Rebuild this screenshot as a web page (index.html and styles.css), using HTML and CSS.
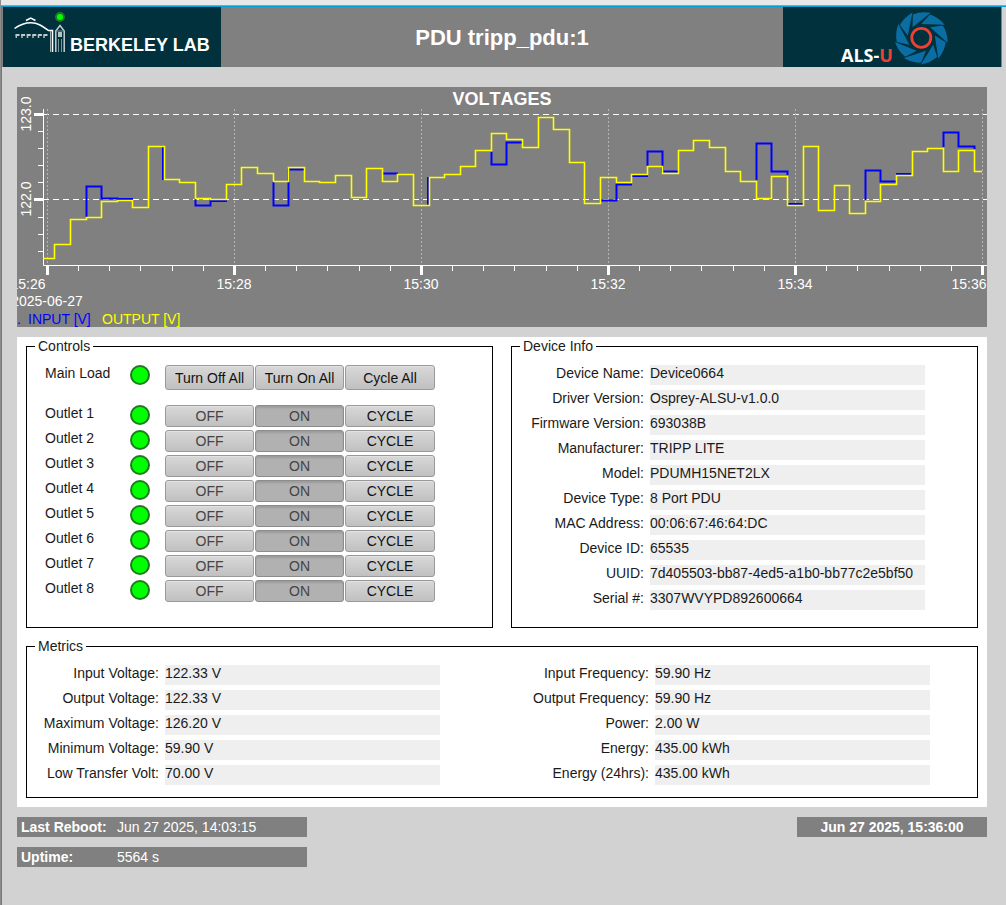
FILE: index.html
```html
<!DOCTYPE html>
<html lang="en">
<head>
<meta charset="utf-8">
<title>PDU tripp_pdu:1</title>
<link rel="stylesheet" href="styles.css">
</head>
<body>
<div class="window-strip"></div>
<div class="window">
  <header class="banner">
    <svg class="logo" viewBox="3 7 218 60" role="img" aria-label="Berkeley Lab">
      <g fill="none" stroke="#fff">
        <path d="M14.500 28.500C20 24.500 25 22.700 31 22.700C38 22.700 43 26.500 48.500 30.500H52.500V52" stroke-width="1.500"/>
        <path d="M50.500 31V52" stroke="#9fb0b5"/>
        <path d="M26 20.500L30.700 18L35.500 20.500" stroke-width="1.500"/>
        <path d="M15.500 35H48" stroke-width="1.600" stroke-dasharray="4 1.600"/>
        <path d="M16.300 35V38M22 35V38M27.500 35V38M33 35V38M38.500 35V38M44 35V38" stroke="#b5c2c6" stroke-width="1.500"/>
        <path d="M55.800 52V31L60 25.500L64.200 31V52" stroke="#c3ced1" stroke-width="1.500"/>
        <path d="M58.500 52V39M61.500 52V39M56 31H64" stroke="#7f959b"/>
      </g>
      <rect x="58" y="32" width="4" height="5" fill="#b5c2c6"/>
      <circle cx="60" cy="17" r="4" fill="#0f0" stroke="#1f7a1f" stroke-width="2"/>
      <text class="lab-name" x="70" y="51">BERKELEY LAB</text>
    </svg>
    <h1 class="title">PDU tripp_pdu:1</h1>
    <svg class="logo" viewBox="783 7 218 60" role="img" aria-label="ALS-U">
      <defs>
        <path id="blade" d="M-8.800 -10.500L-8.400 -23.300Q-1 -26.800 9.500 -25Z"/>
      </defs>
      <g transform="translate(921.300 37.800)" fill="#0a6ea5">
        <use href="#blade"/>
        <use href="#blade" transform="rotate(40)"/>
        <use href="#blade" transform="rotate(80)"/>
        <use href="#blade" transform="rotate(120)"/>
        <use href="#blade" transform="rotate(160)"/>
        <use href="#blade" transform="rotate(200)"/>
        <use href="#blade" transform="rotate(240)"/>
        <use href="#blade" transform="rotate(280)"/>
        <use href="#blade" transform="rotate(320)"/>
        <circle r="9.500" fill="none" stroke="#ee4035" stroke-width="2.800"/>
      </g>
      <text class="als-name" x="841" y="62">ALS-<tspan class="als-u">U</tspan></text>
    </svg>
  </header>

  <main class="content">
    <svg class="chart" viewBox="17 87 970 240" role="img" aria-label="Voltages">
      <text class="chart-title" x="502" y="105">VOLTAGES</text>
      <path class="grid-h" d="M43 114.500H987M43 199.500H987"/>
      <path class="grid-v" d="M47.500 109V265M234.500 109V265M421.500 109V265M608.500 109V265M795.500 109V265M982.500 109V265"/>
      <path class="axis" d="M43.500 109V265.500H987"/>
      <path class="axis" d="M38 131.500H43M38 148.500H43M38 165.500H43M38 182.500H43M38 217.500H43M38 234.500H43M38 251.500H43"/>
      <path class="axis" d="M78.500 266V271M109.500 266V271M140.500 266V271M172.500 266V271M203.500 266V271M265.500 266V271M296.500 266V271M327.500 266V271M359.500 266V271M390.500 266V271M452.500 266V271M483.500 266V271M514.500 266V271M546.500 266V271M577.500 266V271M639.500 266V271M670.500 266V271M701.500 266V271M733.500 266V271M764.500 266V271M826.500 266V271M857.500 266V271M889.500 266V271M920.500 266V271M951.500 266V271"/>
      <path class="axis-major" d="M34 114.500H43M34 199.500H43M47.500 266V275M234.500 266V275M421.500 266V275M608.500 266V275M795.500 266V275M982.500 266V275"/>
      <path class="input-line" d="M86.500 217V186.500H101.500V198.500H117.500V199H133M163 147V180M195.500 199V205.500H210.500V201H227M273.500 181V205.500H288.500V169.500H304M382.500 173.500H398M428 205V177M491.500 152V164.500H506.500V142.500H522M601 200.500H616.500V184.500H632M632 176H648M647.500 166V151.500H662.500V171.500H678M756.500 180V143.500H771.500V171.500H787.500V175M788 204H803M865.500 200V170.500H880.500V181.500H896M896 174H911M943.500 147V132.500H958.500V146.500H974.500V149"/>
      <path class="output-line" d="M43 258.500H54.500V244.500H70.500V219.500H86.500V217.500H101.500V201.500H117.500V200.500H132.500V207.500H148.500V146.500H164.500V179.500H179.500V182.500H195.500V198.500H210.500V199.500H226.500V184.500H241.500V167.500H257.500V173.500H273.500V181.500H288.500V167.500H304.500V181.500H319.500V182.500H335.500V175.500H351.500V197.500H366.500V168.500H382.500V181.500H397.500V174.500H413.500V205.500H429.500V177.500H444.500V174.500H460.500V166.500H475.500V150.500H491.500V133.500H506.500V139.500H522.500V147.500H538.500V117.500H553.500V129.500H569.500V162.500H584.500V203.500H600.500V177.500H616.500V182.500H631.500V174.500H647.500V166.500H662.500V173.500H678.500V150.500H693.500V140.500H709.500V147.500H725.500V171.500H740.500V181.500H756.500V198.500H771.500V176.500H787.500V205.500H803.500V146.500H818.500V210.500H834.500V185.500H849.500V213.500H865.500V201.500H880.500V184.500H896.500V175.500H912.500V151.500H927.500V148.500H943.500V171.500H958.500V150.500H974.500V171.500H982" stroke-width="1.600"/>
      <g class="tick-label">
        <text transform="translate(31 114) rotate(-90)">123.0</text>
        <text transform="translate(31 199) rotate(-90)">122.0</text>
        <text x="28" y="289">15:26</text>
        <text x="234" y="289">15:28</text>
        <text x="421" y="289">15:30</text>
        <text x="608" y="289">15:32</text>
        <text x="795" y="289">15:34</text>
        <text x="969" y="289">15:36</text>
        <text x="47" y="306">2025-06-27</text>
      </g>
      <text class="legend-input" x="17" y="324">.</text>
      <text class="legend-input" x="28" y="324">INPUT [V]</text>
      <text class="legend-output" x="102" y="324">OUTPUT [V]</text>
    </svg>

    <section class="panel">
      <fieldset class="group">
        <legend>Controls</legend>
        <div class="controls">
          <div class="row row-main"><span class="name">Main Load</span><span class="led"></span><div class="buttons"><button>Turn Off All</button><button>Turn On All</button><button>Cycle All</button></div></div>
          <div class="row"><span class="name">Outlet 1</span><span class="led"></span><div class="buttons"><button class="off">OFF</button><button class="on" aria-pressed="true">ON</button><button>CYCLE</button></div></div>
          <div class="row"><span class="name">Outlet 2</span><span class="led"></span><div class="buttons"><button class="off">OFF</button><button class="on" aria-pressed="true">ON</button><button>CYCLE</button></div></div>
          <div class="row"><span class="name">Outlet 3</span><span class="led"></span><div class="buttons"><button class="off">OFF</button><button class="on" aria-pressed="true">ON</button><button>CYCLE</button></div></div>
          <div class="row"><span class="name">Outlet 4</span><span class="led"></span><div class="buttons"><button class="off">OFF</button><button class="on" aria-pressed="true">ON</button><button>CYCLE</button></div></div>
          <div class="row"><span class="name">Outlet 5</span><span class="led"></span><div class="buttons"><button class="off">OFF</button><button class="on" aria-pressed="true">ON</button><button>CYCLE</button></div></div>
          <div class="row"><span class="name">Outlet 6</span><span class="led"></span><div class="buttons"><button class="off">OFF</button><button class="on" aria-pressed="true">ON</button><button>CYCLE</button></div></div>
          <div class="row"><span class="name">Outlet 7</span><span class="led"></span><div class="buttons"><button class="off">OFF</button><button class="on" aria-pressed="true">ON</button><button>CYCLE</button></div></div>
          <div class="row"><span class="name">Outlet 8</span><span class="led"></span><div class="buttons"><button class="off">OFF</button><button class="on" aria-pressed="true">ON</button><button>CYCLE</button></div></div>
        </div>
      </fieldset>

      <fieldset class="group">
        <legend>Device Info</legend>
        <dl class="readouts device">
          <dt>Device Name:</dt><dd>Device0664</dd>
          <dt>Driver Version:</dt><dd>Osprey-ALSU-v1.0.0</dd>
          <dt>Firmware Version:</dt><dd>693038B</dd>
          <dt>Manufacturer:</dt><dd>TRIPP LITE</dd>
          <dt>Model:</dt><dd>PDUMH15NET2LX</dd>
          <dt>Device Type:</dt><dd>8 Port PDU</dd>
          <dt>MAC Address:</dt><dd>00:06:67:46:64:DC</dd>
          <dt>Device ID:</dt><dd>65535</dd>
          <dt>UUID:</dt><dd>7d405503-bb87-4ed5-a1b0-bb77c2e5bf50</dd>
          <dt>Serial #:</dt><dd>3307WVYPD892600664</dd>
        </dl>
      </fieldset>

      <fieldset class="group group-wide">
        <legend>Metrics</legend>
        <div class="metrics">
          <dl class="readouts">
            <dt>Input Voltage:</dt><dd>122.33 V</dd>
            <dt>Output Voltage:</dt><dd>122.33 V</dd>
            <dt>Maximum Voltage:</dt><dd>126.20 V</dd>
            <dt>Minimum Voltage:</dt><dd>59.90 V</dd>
            <dt>Low Transfer Volt:</dt><dd>70.00 V</dd>
          </dl>
          <dl class="readouts">
            <dt>Input Frequency:</dt><dd>59.90 Hz</dd>
            <dt>Output Frequency:</dt><dd>59.90 Hz</dd>
            <dt>Power:</dt><dd>2.00 W</dd>
            <dt>Energy:</dt><dd>435.00 kWh</dd>
            <dt>Energy (24hrs):</dt><dd>435.00 kWh</dd>
          </dl>
        </div>
      </fieldset>
    </section>

    <footer class="status">
      <div class="status-left">
        <div class="bar"><strong class="bar-name">Last Reboot:</strong><span>Jun 27 2025, 14:03:15</span></div>
        <div class="bar"><strong class="bar-name">Uptime:</strong><span>5564 s</span></div>
      </div>
      <time class="clock">Jun 27 2025, 15:36:00</time>
    </footer>
  </main>
</div>
</body>
</html>
```
FILE: styles.css
```css
* { box-sizing: border-box; }

body {
  margin: 0;
  min-height: 100vh;
  display: flex;
  flex-direction: column;
  background: #d2d2d2;
  border-left: 1px solid #8c8c8c;
  font: 14px/16px "Liberation Sans", Arial, sans-serif;
  color: #1a1a1a;
}

.window-strip {
  height: 6px;
  background: #e8e8e8;
  border-bottom: 1px solid #a09c98;
}

.window {
  flex: 1;
  border-top: 1px solid #039ed3;
  border-left: 1px solid #039ed3;
}

.banner {
  display: flex;
  justify-content: space-between;
  height: 60px;
  margin-right: 4px;
  padding: 0 1px;
  background: #808080;
}

.logo {
  width: 218px;
  height: 60px;
  background: #00313c;
}

.lab-name { font-size: 18px; font-weight: bold; fill: #fff; }
.als-name { font: bold 18px "Open Sans", sans-serif; fill: #fff; }
.als-u { fill: #ee4035; }

.title {
  margin: 0;
  font-size: 22px;
  line-height: 62px;
  color: #fff;
}

.content {
  margin: 20px 19px 0 15px;
}

.chart {
  display: block;
  width: 100%;
  overflow: hidden;
  background: #808080;
}

.chart path { fill: none; }
.chart-title { font-size: 18px; font-weight: bold; font-kerning: none; fill: #fff; text-anchor: middle; }
.grid-h { stroke: #fff; stroke-dasharray: 6 4; }
.grid-v { stroke: #b4b4b4; stroke-dasharray: 2 2; }
.axis { stroke: #fff; }
.axis-major { stroke: #fff; stroke-width: 3; }
.input-line { stroke: #00f; stroke-width: 2; }
.output-line { stroke: #ff0; }
.tick-label { fill: #fff; text-anchor: middle; }
.legend-input { fill: #00f; }
.legend-output { fill: #ff0; }

.panel {
  display: grid;
  grid-template-columns: 1fr 1fr;
  gap: 9px 18px;
  margin-top: 10px;
  padding: 0 9px 9px;
  background: #fff;
}

.group {
  min-width: 0;
  margin: 0;
  padding: 10px 0 17px;
  border: 1px solid #000;
}

.group-wide {
  grid-column: 1 / -1;
  padding-bottom: 12px;
}

legend {
  margin-left: 8px;
  padding: 0 3px;
  line-height: 18px;
}

.controls {
  display: grid;
  gap: 3px;
  padding-left: 18px;
}

.row {
  display: flex;
  height: 22px;
}

.row-main {
  height: 25px;
  margin-bottom: 12px;
}

.name { width: 85px; }

.led {
  width: 20px;
  height: 20px;
  margin-right: 15px;
  border: 2px solid #1f7a1f;
  border-radius: 50%;
  background: #0f0;
}

.buttons {
  display: grid;
  grid-template-columns: 89px 89px 90px;
  gap: 1px;
}

button {
  padding: 0;
  border: 1px solid #999;
  border-radius: 3px;
  background: linear-gradient(#d8d8d8, #c0c0c0);
  box-shadow: inset 0 1px #e2e2e2;
  font: inherit;
  color: #111;
}

.off { color: #444; }

.on {
  border-color: #8c8c8c;
  background: #b1b1b1;
  box-shadow: inset 0 2px 2px #9c9c9c;
  color: #444;
}

.readouts {
  display: grid;
  grid-template-columns: 132px 1fr;
  gap: 5px 6px;
  margin: 0;
  padding-right: 47px;
}

.device { padding-right: 52px; }

dt { text-align: right; }

dd {
  height: 20px;
  margin: 0;
  background: #efefef;
  white-space: nowrap;
}

.metrics {
  display: grid;
  grid-template-columns: 1fr 1fr;
  gap: 30px;
}

.status {
  display: flex;
  justify-content: space-between;
  align-items: flex-start;
  margin-top: 10px;
  line-height: 20px;
  color: #fff;
}

.status-left {
  display: grid;
  gap: 10px;
}

.bar {
  display: flex;
  width: 290px;
  padding: 0 4px;
  background: #808080;
}

.bar-name { width: 96px; }

.clock {
  width: 190px;
  background: #808080;
  font-weight: bold;
  text-align: center;
}
```
